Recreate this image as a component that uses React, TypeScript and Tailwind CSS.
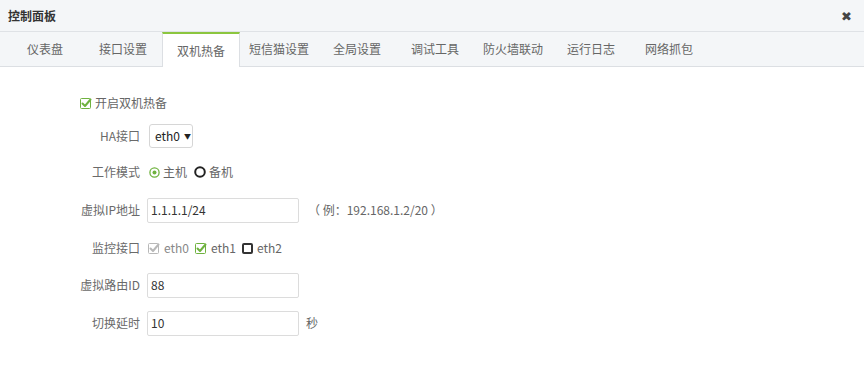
import React from "react";

const tabs = ["仪表盘", "接口设置", "双机热备", "短信猫设置", "全局设置", "调试工具", "防火墙联动", "运行日志", "网络抓包"];

function Check({ state }: { state: "on" | "off" | "disabled" }) {
  if (state === "off") {
    return <span className="inline-block w-[11px] h-[11px] rounded-[2px] border-2 border-[#333] bg-white" />;
  }
  const color = state === "on" ? "#6fb23f" : "#b8b8b8";
  return (
    <svg width="12" height="12" viewBox="0 0 12 12">
      <rect x="0.5" y="1.5" width="10" height="10" rx="1" fill="white" stroke={color} strokeWidth="1" />
      <path d="M2.5 6.5 L5 9 L10.5 2.5" fill="none" stroke={color} strokeWidth="2" strokeLinecap="round" strokeLinejoin="round" />
    </svg>
  );
}

function Radio({ checked }: { checked?: boolean }) {
  if (checked) {
    return (
      <svg width="11" height="11" viewBox="0 0 11 11">
        <circle cx="5.5" cy="5.5" r="4.6" fill="white" stroke="#6fb23f" strokeWidth="1.3" />
        <circle cx="5.5" cy="5.5" r="2" fill="#6fb23f" />
      </svg>
    );
  }
  return (
    <svg width="12" height="12" viewBox="0 0 12 12">
      <circle cx="6" cy="6" r="4.8" fill="white" stroke="#222" strokeWidth="2" />
    </svg>
  );
}

function Row({ label, h, children }: { label: string; h: string; children: React.ReactNode }) {
  return (
    <div className={`flex items-center ${h}`}>
      <div className="w-[140px] text-right text-[#6a6a6a]">{label}</div>
      <div className="ml-[7px] flex items-center">{children}</div>
    </div>
  );
}

function Input({ value }: { value: string }) {
  return (
    <div className="w-[152px] h-[25px] border border-[#dcdcdc] rounded-[2px] bg-white flex items-center px-[3px] text-[#333]">
      {value}
    </div>
  );
}

export default function App() {
  return (
    <div
      className="w-[864px] h-[375px] bg-white text-[12px] overflow-hidden"
      style={{ fontFamily: '"Noto Sans CJK SC", "Noto Sans", sans-serif' }}
    >
      {/* header */}
      <div className="h-[32px] bg-[#f4f6f8] border-b border-[#dfe2e6] flex items-center justify-between px-[8px]">
        <span className="font-bold text-[#333]">控制面板</span>
        <span className="text-[#444] text-[13px] mr-[4px]">✖</span>
      </div>
      {/* tabs */}
      <div className="h-[35px] bg-[#f4f6f8] border-b border-[#dcdfe3] flex pl-[6px]">
        {tabs.map((t, i) =>
          i === 2 ? (
            <div
              key={t}
              className="w-[78px] h-[35px] bg-white border-t-2 border-[#8cc63f] border-x border-x-[#dcdfe3] flex items-center justify-center text-[#666] -mb-px"
            >
              {t}
            </div>
          ) : (
            <div key={t} className="w-[78px] flex items-center justify-center text-[#666]">
              {t}
            </div>
          )
        )}
      </div>
      {/* content */}
      <div className="pt-[24px]">
        <div className="h-[24px] flex items-center pl-[80px] gap-[3px] text-[#666]">
          <Check state="on" />
          <span>开启双机热备</span>
        </div>
        <Row label="HA接口" h="h-[42px]">
          <div className="ml-[2px] w-[44px] h-[24px] border border-[#d6d6d6] rounded-[3px] flex items-center pl-[5px] gap-[4px] text-[#222]">
            <span>eth0</span>
            <span className="text-[7px]">▼</span>
          </div>
        </Row>
        <Row label="工作模式" h="h-[30px]">
          <div className="flex items-center gap-[3px] ml-[2px] text-[#666]">
            <Radio checked />
            <span>主机</span>
            <span className="ml-[1px]" />
            <Radio />
            <span>备机</span>
          </div>
        </Row>
        <Row label="虚拟IP地址" h="h-[46px]">
          <Input value="1.1.1.1/24" />
          <span className="ml-[9px] text-[#666]">（ 例：192.168.1.2/20 ）</span>
        </Row>
        <Row label="监控接口" h="h-[30px]">
          <div className="flex items-center gap-[4px] ml-[1px] text-[#666]">
            <Check state="disabled" />
            <span className="text-[#888] mr-[2px]">eth0</span>
            <Check state="on" />
            <span className="mr-[2px]">eth1</span>
            <Check state="off" />
            <span>eth2</span>
          </div>
        </Row>
        <Row label="虚拟路由ID" h="h-[44px]">
          <Input value="88" />
        </Row>
        <Row label="切换延时" h="h-[32px]">
          <Input value="10" />
          <span className="ml-[7px] text-[#666]">秒</span>
        </Row>
      </div>
    </div>
  );
}
